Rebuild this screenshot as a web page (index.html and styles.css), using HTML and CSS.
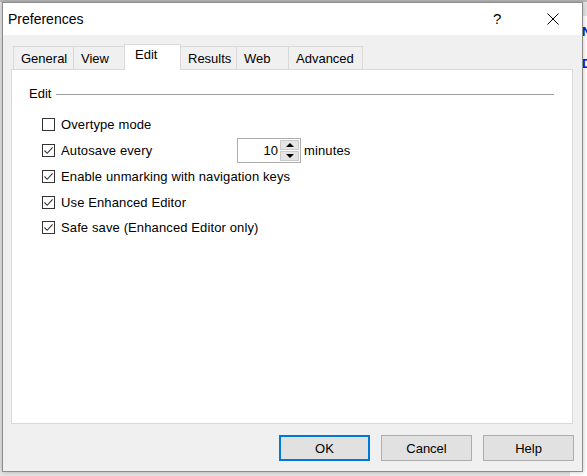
FILE: index.html
```html
<!DOCTYPE html>
<html lang="en">
<head>
    <meta charset="UTF-8">
    <title>Preferences</title>
    <link rel="stylesheet" href="styles.css">
</head>
<body>
    <div class="desktop">
        <div class="app-behind">
            <span class="app-letter">N</span>
            <span class="app-letter">D</span>
        </div>

        <div class="dialog">
            <div class="titlebar">
                <span class="title">Preferences</span>
                <span class="title-help">?</span>
                <span class="title-close">
                    <svg width="12" height="12" viewBox="0 0 12 12">
                        <path d="M0.5 0.5L11.5 11.5M11.5 0.5L0.5 11.5" stroke="#000" stroke-width="1" fill="none"/>
                    </svg>
                </span>
            </div>

            <div class="content">
                <div class="tabs">
                    <div class="tab tab-general">General</div>
                    <div class="tab tab-view">View</div>
                    <div class="tab tab-edit selected">Edit</div>
                    <div class="tab tab-results">Results</div>
                    <div class="tab tab-web">Web</div>
                    <div class="tab tab-advanced">Advanced</div>
                </div>

                <div class="panel">
                    <div class="group-head">
                        <span class="group-label">Edit</span>
                        <span class="group-line"></span>
                    </div>

                    <div class="options">
                        <div class="option">
                            <span class="checkbox"></span>
                            <span class="option-text">Overtype mode</span>
                        </div>
                        <div class="option">
                            <span class="checkbox checked">
                                <svg width="11" height="11" viewBox="0 0 11 11"><path d="M1.5 5.5L4.2 8.3L9.6 2.3" stroke="#333" stroke-width="1.1" fill="none"/></svg>
                            </span>
                            <span class="option-text autosave">Autosave every</span>
                            <div class="spinner">
                                <span class="spinner-value">10</span>
                                <div class="spinner-buttons">
                                    <span class="spin-btn"><span class="arrow-up"></span></span>
                                    <span class="spin-btn"><span class="arrow-down"></span></span>
                                </div>
                            </div>
                            <span class="option-text">minutes</span>
                        </div>
                        <div class="option">
                            <span class="checkbox checked">
                                <svg width="11" height="11" viewBox="0 0 11 11"><path d="M1.5 5.5L4.2 8.3L9.6 2.3" stroke="#333" stroke-width="1.1" fill="none"/></svg>
                            </span>
                            <span class="option-text">Enable unmarking with navigation keys</span>
                        </div>
                        <div class="option">
                            <span class="checkbox checked">
                                <svg width="11" height="11" viewBox="0 0 11 11"><path d="M1.5 5.5L4.2 8.3L9.6 2.3" stroke="#333" stroke-width="1.1" fill="none"/></svg>
                            </span>
                            <span class="option-text">Use Enhanced Editor</span>
                        </div>
                        <div class="option">
                            <span class="checkbox checked">
                                <svg width="11" height="11" viewBox="0 0 11 11"><path d="M1.5 5.5L4.2 8.3L9.6 2.3" stroke="#333" stroke-width="1.1" fill="none"/></svg>
                            </span>
                            <span class="option-text">Safe save (Enhanced Editor only)</span>
                        </div>
                    </div>
                </div>

                <div class="buttons">
                    <button class="btn default">OK</button>
                    <button class="btn">Cancel</button>
                    <button class="btn">Help</button>
                </div>
            </div>
        </div>
    </div>
</body>
</html>
```

FILE: styles.css
```css
body {
    margin: 0;
    font-family: 'Liberation Sans', Arial, sans-serif;
    font-size: 13px;
    color: #000;
    overflow: hidden;
}

.desktop {
    position: relative;
    width: 587px;
    height: 476px;
    background: #e6e6e6;
    border-top: 2px solid #b9b9b9;
    box-sizing: border-box;
}

/* window of the app behind the dialog */
.app-behind {
    position: absolute;
    left: 570px;
    top: 14px;
    width: 17px;
    height: 462px;
    background: #fff;
    display: flex;
    flex-direction: column;
    padding-left: 12px;
    box-sizing: border-box;
}

.app-letter {
    color: #0018d0;
    font-weight: bold;
    font-size: 13px;
    line-height: 14px;
    margin-top: 9px;
    margin-bottom: 9px;
}

.dialog {
    position: absolute;
    left: 2px;
    top: 0;
    width: 581px;
    height: 470px;
    box-sizing: border-box;
    border: 1px solid #8c8c8c;
    background: #f0f0f0;
    box-shadow: 0 0 5px rgba(0, 0, 0, 0.25);
    display: flex;
    flex-direction: column;
}

.titlebar {
    height: 32px;
    background: #fff;
    display: flex;
    align-items: center;
    padding-left: 5px;
}

.title {
    font-size: 14px;
    flex: 1;
}

.title-help {
    font-size: 15px;
    width: 12px;
    margin-right: 42px;
    margin-top: -2px;
}

.title-close {
    display: flex;
    width: 12px;
    height: 12px;
    margin-right: 23px;
}

.content {
    flex: 1;
    display: flex;
    flex-direction: column;
    padding: 9px 9px 0 8px;
}

.tabs {
    display: flex;
    align-items: flex-end;
    height: 25px;
    padding-left: 2px;
}

.tab {
    box-sizing: border-box;
    height: 23px;
    border: 1px solid #d9d9d9;
    border-bottom: none;
    margin-left: -1px;
    padding-left: 7px;
    line-height: 24px;
    background: #f0f0f0;
}

.tab:first-child {
    margin-left: 0;
}

.tab.selected {
    position: relative;
    z-index: 1;
    height: 26px;
    margin-bottom: -1px;
    background: #fff;
    padding-left: 10px;
    line-height: 20px;
}

.tab-general { width: 61px; }
.tab-view { width: 52px; }
.tab-edit { width: 57px; }
.tab-results { width: 57px; }
.tab-web { width: 53px; }
.tab-advanced { width: 75px; }

.panel {
    height: 355px;
    box-sizing: border-box;
    background: #fff;
    border: 1px solid #d9d9d9;
    padding: 16px 18px 0 17px;
}

.group-head {
    display: flex;
    align-items: center;
    height: 15px;
}

.group-line {
    flex: 1;
    height: 1px;
    background: #a0a0a0;
    margin-left: 5px;
    margin-top: 1px;
}

.options {
    padding-left: 13px;
    margin-top: 11px;
}

.option {
    display: flex;
    align-items: center;
    height: 25.75px;
}

.option-text {
    letter-spacing: 0.12px;
}

.checkbox {
    box-sizing: border-box;
    width: 13px;
    height: 13px;
    border: 1px solid #333;
    background: #fff;
    display: flex;
    align-items: center;
    justify-content: center;
    margin-right: 6px;
}

.checkbox svg {
    display: block;
}

.autosave {
    width: 176px;
}

.spinner {
    box-sizing: border-box;
    width: 64px;
    height: 25px;
    border: 1px solid #acacac;
    display: flex;
    align-items: center;
    margin-right: 3px;
}

.spinner-value {
    flex: 1;
    text-align: right;
    padding-right: 2px;
}

.spinner-buttons {
    display: flex;
    flex-direction: column;
    gap: 1px;
    width: 19px;
    height: 21px;
    margin-right: 1px;
}

.spin-btn {
    flex: 1;
    background: #e5e5e5;
    border: 1px solid #c9c9c9;
    display: flex;
    align-items: center;
    justify-content: center;
}

.arrow-up {
    width: 0;
    height: 0;
    border-left: 4px solid transparent;
    border-right: 4px solid transparent;
    border-bottom: 4px solid #000;
}

.arrow-down {
    width: 0;
    height: 0;
    border-left: 4px solid transparent;
    border-right: 4px solid transparent;
    border-top: 4px solid #000;
}

.buttons {
    display: flex;
    justify-content: flex-end;
    gap: 11px;
    margin-top: 11px;
    margin-right: -1px;
}

.btn {
    box-sizing: border-box;
    width: 91px;
    height: 26px;
    font-family: 'Liberation Sans', Arial, sans-serif;
    font-size: 13px;
    color: #000;
    background: #e1e1e1;
    border: 1px solid #adadad;
    padding: 0;
}

.btn.default {
    border: 2px solid #0078d7;
}
```
